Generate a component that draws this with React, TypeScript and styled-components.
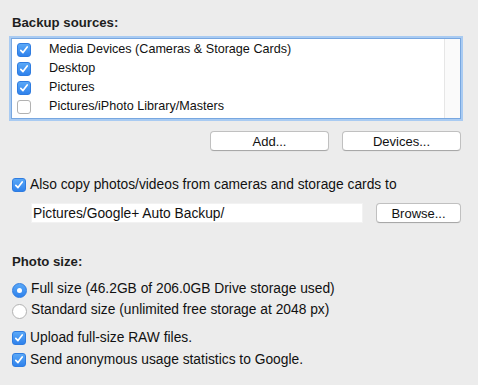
import React, { useState } from 'react';
import styled, { createGlobalStyle } from 'styled-components';

const GlobalStyle = createGlobalStyle`
  html, body {
    margin: 0;
    padding: 0;
    background: #ececec;
  }
  body {
    font-family: "Liberation Sans", Arial, sans-serif;
    font-size: 13px;
    color: #111;
  }
`;

const Panel = styled.div`
  width: 478px;
  height: 385px;
  box-sizing: border-box;
  padding: 15px 17px 0 12px;
  display: flex;
  flex-direction: column;
`;

const SectionTitle = styled.div<{ $top?: number }>`
  font-weight: bold;
  font-size: 13.2px;
  line-height: 16px;
  color: #1e1e1e;
  margin-top: ${({ $top }) => $top ?? 0}px;
`;

const ListBox = styled.div`
  margin: 7px 0 0 -1px;
  height: 81px;
  box-sizing: border-box;
  border: 1px solid #78a7e0;
  box-shadow: 0 0 0 2px #a9cbf2;
  background: #fff;
  display: flex;
`;

const ListRows = styled.div`
  flex: 1;
  padding-top: 1px;
`;

const ScrollTrack = styled.div`
  width: 15px;
  background: #fafafa;
  border-left: 1px solid #e6e6e6;
`;

const ListRow = styled.div`
  height: 19px;
  display: flex;
  align-items: center;
  padding-left: 5px;
  gap: 18px;
  font-size: 12.6px;
  line-height: 19px;
`;

const Box = styled.span<{ $checked: boolean }>`
  flex: none;
  width: 14px;
  height: 14px;
  box-sizing: border-box;
  border-radius: 3px;
  display: inline-flex;
  align-items: center;
  justify-content: center;
  ${({ $checked }) =>
    $checked
      ? `background: linear-gradient(#5aa8f7, #2f82ec);
         border: 1px solid #2f7ce0;`
      : `background: #fff;
         border: 1px solid #b2b2b2;`}
`;

const Radio = styled.span<{ $checked: boolean }>`
  flex: none;
  width: 15px;
  height: 15px;
  box-sizing: border-box;
  border-radius: 50%;
  margin-top: 3px;
  display: inline-flex;
  align-items: center;
  justify-content: center;
  ${({ $checked }) =>
    $checked
      ? `background: linear-gradient(#5aa8f7, #2f82ec);
         border: 1px solid #2f7ce0;`
      : `background: #fff;
         border: 1px solid #b2b2b2;`}
`;

const Dot = styled.span`
  width: 5px;
  height: 5px;
  border-radius: 50%;
  background: #fff;
`;

const ButtonRow = styled.div`
  display: flex;
  justify-content: flex-end;
  gap: 13px;
  margin-top: 12px;
`;

const PushButton = styled.button<{ $width: number }>`
  width: ${({ $width }) => $width}px;
  height: 20px;
  padding: 0;
  font-family: "Liberation Sans", Arial, sans-serif;
  font-size: 13px;
  color: #111;
  background: #fff;
  border: 1px solid #c0c0c0;
  border-bottom-color: #a8a8a8;
  border-radius: 4px;
  box-shadow: 0 0.5px 0 rgba(0, 0, 0, 0.05);
`;

const OptionRow = styled.label<{ $top?: number; $height?: number }>`
  display: flex;
  align-items: center;
  gap: 4px;
  font-size: 13.8px;
  height: ${({ $height }) => $height ?? 21}px;
  line-height: ${({ $height }) => $height ?? 21}px;
  margin-top: ${({ $top }) => $top ?? 0}px;
  white-space: nowrap;
`;

const PathRow = styled.div`
  display: flex;
  align-items: center;
  gap: 13px;
  margin: 9px 0 0 19px;
`;

const PathField = styled.div`
  width: 332px;
  height: 20px;
  box-sizing: border-box;
  padding-left: 1px;
  font-size: 13.8px;
  line-height: 19px;
  background: #fff;
  border: 1px solid #f2f2f2;
`;

const Check = () => (
  <svg width="10" height="10" viewBox="0 0 10 10">
    <path d="M1.8 5.3 L4 7.6 L8.2 2" fill="none" stroke="#fff" strokeWidth="1.7" strokeLinecap="round" strokeLinejoin="round" />
  </svg>
);

const CheckBox = ({ checked }: { checked: boolean }) => (
  <Box $checked={checked}>{checked && <Check />}</Box>
);

const sources = [
  { name: 'Media Devices (Cameras & Storage Cards)', on: true },
  { name: 'Desktop', on: true },
  { name: 'Pictures', on: true },
  { name: 'Pictures/iPhoto Library/Masters', on: false },
];

const App: React.FC = () => {
  const [size] = useState<'full' | 'standard'>('full');

  return (
    <Panel>
      <GlobalStyle />
      <SectionTitle>Backup sources:</SectionTitle>
      <ListBox>
        <ListRows>
          {sources.map((s) => (
            <ListRow key={s.name}>
              <CheckBox checked={s.on} />
              <span>{s.name}</span>
            </ListRow>
          ))}
        </ListRows>
        <ScrollTrack />
      </ListBox>

      <ButtonRow>
        <PushButton $width={119}>Add...</PushButton>
        <PushButton $width={119}>Devices...</PushButton>
      </ButtonRow>

      <OptionRow $top={25} $height={18}>
        <CheckBox checked />
        <span>Also copy photos/videos from cameras and storage cards to</span>
      </OptionRow>

      <PathRow>
        <PathField>Pictures/Google+ Auto Backup/</PathField>
        <PushButton $width={85}>Browse...</PushButton>
      </PathRow>

      <SectionTitle $top={31}>Photo size:</SectionTitle>

      <OptionRow $top={8}>
        <Radio $checked={size === 'full'}>{size === 'full' && <Dot />}</Radio>
        <span>Full size (46.2GB of 206.0GB Drive storage used)</span>
      </OptionRow>
      <OptionRow>
        <Radio $checked={size === 'standard'}>{size === 'standard' && <Dot />}</Radio>
        <span>Standard size (unlimited free storage at 2048 px)</span>
      </OptionRow>

      <OptionRow $top={7}>
        <CheckBox checked />
        <span>Upload full-size RAW files.</span>
      </OptionRow>
      <OptionRow $top={1}>
        <CheckBox checked />
        <span>Send anonymous usage statistics to Google.</span>
      </OptionRow>
    </Panel>
  );
};

export default App;
